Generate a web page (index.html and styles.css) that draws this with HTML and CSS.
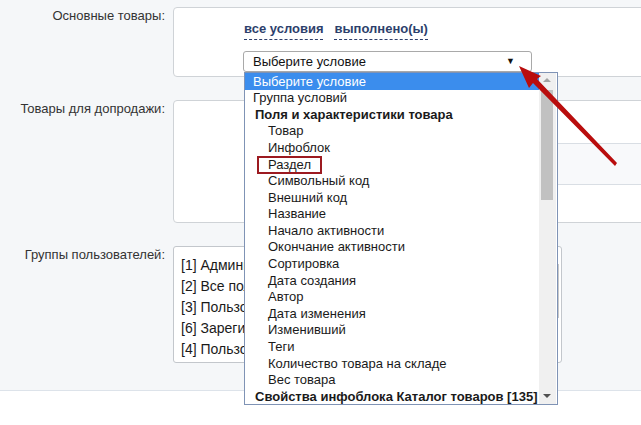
FILE: index.html
```html
<!DOCTYPE html>
<html lang="ru">
<head>
<meta charset="utf-8">
<title>Условия</title>
<link rel="stylesheet" href="styles.css">
</head>
<body>
<div class="page">
  <div class="form">
    <div class="row">
      <div class="label">Основные товары:</div>
      <div class="box box-main">
        <div class="links">
          <span class="link">все условия</span>
          <span class="link">выполнено(ы)</span>
        </div>
        <div class="fake-select">
          <span class="fs-text">Выберите условие</span>
          <span class="caret">&#9660;</span>
          <div class="dropdown">
            <div class="dd-list">
              <div class="opt sel">Выберите условие</div>
              <div class="opt">Группа условий</div>
              <div class="opt grp">Поля и характеристики товара</div>
              <div class="opt sub">Товар</div>
              <div class="opt sub">Инфоблок</div>
              <div class="opt sub"><span class="mark">Раздел</span></div>
              <div class="opt sub">Символьный код</div>
              <div class="opt sub">Внешний код</div>
              <div class="opt sub">Название</div>
              <div class="opt sub">Начало активности</div>
              <div class="opt sub">Окончание активности</div>
              <div class="opt sub">Сортировка</div>
              <div class="opt sub">Дата создания</div>
              <div class="opt sub">Автор</div>
              <div class="opt sub">Дата изменения</div>
              <div class="opt sub">Изменивший</div>
              <div class="opt sub">Теги</div>
              <div class="opt sub">Количество товара на складе</div>
              <div class="opt sub">Вес товара</div>
              <div class="opt grp">Свойства инфоблока Каталог товаров [135]</div>
            </div>
            <div class="dd-scroll">
              <span class="sb-up"></span>
              <span class="sb-thumb"></span>
              <span class="sb-down"></span>
            </div>
          </div>
        </div>
      </div>
    </div>
    <div class="row">
      <div class="label">Товары для допродажи:</div>
      <div class="box box-upsell">
        <div class="stripe"></div>
      </div>
    </div>
    <div class="row">
      <div class="label">Группы пользователей:</div>
      <div class="multi">
        <div class="m-list">
          <div class="m-opt">[1] Администраторы</div>
          <div class="m-opt">[2] Все пользователи (в том числе неавторизованные)</div>
          <div class="m-opt">[3] Пользователи, имеющие право голосовать за рейтинг</div>
          <div class="m-opt">[6] Зарегистрированные пользователи</div>
          <div class="m-opt">[4] Пользователи имеющие право голосовать за авторитет</div>
        </div>
        <span class="m-thumb"></span>
      </div>
    </div>
  </div>
  <svg class="arrow" width="641" height="425" viewBox="0 0 641 425">
    <polygon points="519,66 541,76 537,79 617,163 615,166 533,83 529,88" fill="#b90d0d"/>
  </svg>
</div>
</body>
</html>
```

FILE: styles.css
```css
html, body {
  margin: 0;
  padding: 0;
  background: #ffffff;
  overflow: hidden;
}

.page {
  position: relative;
  width: 641px;
  height: 425px;
  font-family: "Liberation Sans", Arial, sans-serif;
  font-size: 13px;
  color: #222;
}

.form {
  background: #f5f7f9;
  border-bottom: 1px solid #dde3ea;
  padding: 7px 0 26px 0;
  display: grid;
  row-gap: 23px;
  height: 357px;
  align-content: start;
}

.row {
  display: grid;
  grid-template-columns: 165px 1fr;
  column-gap: 8px;
  align-items: start;
}

.label {
  text-align: right;
  line-height: 16px;
  padding-top: 1px;
  color: #333;
  white-space: nowrap;
}

.box {
  background: #fff;
  border: 1px solid #cfd3d7;
  border-radius: 4px;
  margin-right: -30px;
  position: relative;
}

.box-main {
  height: 51px;
  padding: 13px 0 4px 69px;
}

.links {
  display: flex;
  gap: 11px;
  height: 19px;
  padding-left: 1px;
}

.link {
  font-weight: bold;
  color: #2d3f6c;
  line-height: 16px;
  padding-bottom: 2px;
  border-bottom: 1px dashed #2d3f6c;
  align-self: flex-start;
}

.fake-select {
  position: relative;
  margin-top: 11px;
  height: 19px;
  border: 1px solid #a9a9a9;
  border-radius: 3px;
  background: #fff;
  display: flex;
  align-items: center;
  justify-content: space-between;
  padding: 0 0 0 9px;
  box-sizing: content-box;
  width: 278px;
}

.fs-text {
  color: #111;
  line-height: 16px;
}

.caret {
  font-size: 9px;
  color: #111;
  margin-right: 16px;
  line-height: 9px;
}

.dropdown {
  position: absolute;
  left: 0px;
  top: 20px;
  width: 312px;
  height: 331px;
  border: 1px solid #7f93b5;
  background: #fff;
  display: flex;
  z-index: 5;
}

.dd-list {
  flex: 1;
  overflow: hidden;
}

.opt {
  height: 16.6px;
  line-height: 16.6px;
  padding-left: 8px;
  white-space: nowrap;
  color: #1a1a1a;
}

.opt.sel {
  background: #3b8ded;
  color: #fff;
  height: 17px;
  line-height: 17px;
}

.opt.grp {
  font-weight: bold;
  padding-left: 10px;
}

.opt.sub {
  padding-left: 23px;
}

.mark {
  display: inline-block;
  margin-left: -11px;
  padding-left: 9px;
  width: 52px;
  height: 14px;
  line-height: 14px;
  border: 2px solid #9c1a20;
}

.dd-scroll {
  width: 17px;
  background: #f0f0f0;
  position: relative;
  margin-right: 1px;
}

.sb-up {
  position: absolute;
  left: 4px;
  top: 5px;
  width: 0;
  height: 0;
  border-left: 4px solid transparent;
  border-right: 4px solid transparent;
  border-bottom: 4px solid #a3a3a3;
}

.sb-thumb {
  position: absolute;
  left: 2px;
  top: 17px;
  width: 12px;
  height: 110px;
  background: #c1c1c1;
}

.sb-down {
  position: absolute;
  left: 4px;
  bottom: 6px;
  width: 0;
  height: 0;
  border-left: 4px solid transparent;
  border-right: 4px solid transparent;
  border-top: 4px solid #505050;
}

.box-upsell {
  height: 121px;
}

.stripe {
  margin-top: 42px;
  margin-left: 72px;
  height: 40px;
  background: #f8f9fb;
  border-top: 1px solid #d9dee4;
  border-bottom: 1px solid #d9dee4;
}

.multi {
  position: relative;
  width: 387px;
  height: 107px;
  padding-top: 8px;
  border: 1px solid #c3c7cc;
  border-radius: 3px;
  background: #fff;
  box-sizing: content-box;
}

.m-list {
  width: 370px;
  overflow: hidden;
}

.m-opt {
  font-size: 14px;
  line-height: 21px;
  padding-left: 7px;
  white-space: nowrap;
  color: #1a1a1a;
}

.m-thumb {
  position: absolute;
  right: 2px;
  top: 17px;
  width: 1px;
  height: 54px;
  background: #c9c9c9;
}

.arrow {
  position: absolute;
  left: 0;
  top: 0;
  z-index: 10;
  pointer-events: none;
}
```
